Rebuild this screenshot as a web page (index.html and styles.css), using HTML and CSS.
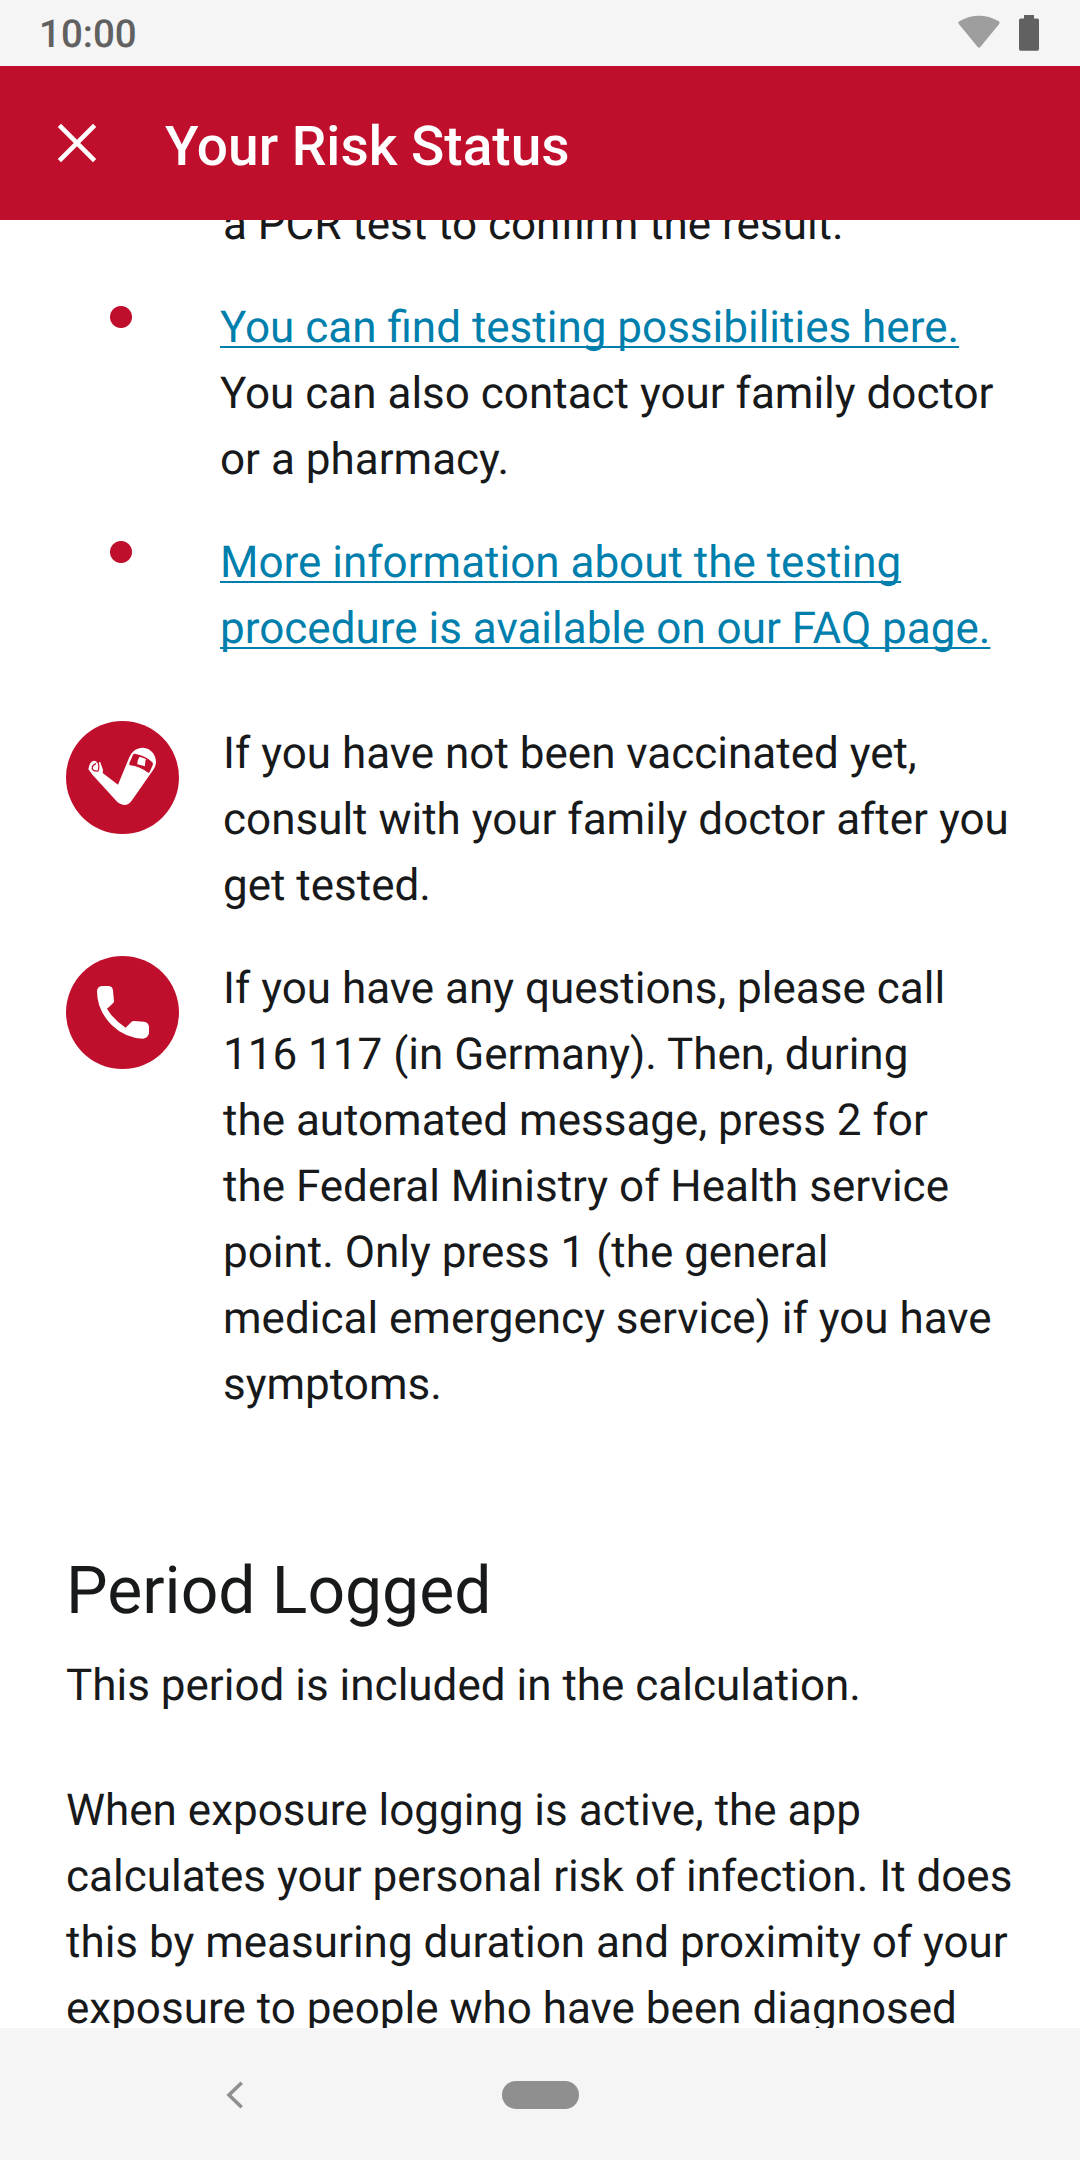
FILE: index.html
```html
<!DOCTYPE html>
<html lang="en"><head><meta charset="utf-8"><title>Your Risk Status</title><link rel="stylesheet" href="styles.css"></head>
<body>
<div class="status"><span class="clock">10:00</span><span class="indicators">
<svg class="wifi" width="44" height="34" viewBox="0 0 44 34"><path d="M2.2 9.4Q.2 7.2 2.7 6Q22-4.6 41.4 6Q43.6 7.2 41.8 9.4L23.3 32Q22 33.6 20.7 32Z" fill="#9e9e9e"/></svg>
<svg class="battery" width="20" height="36" viewBox="0 0 20 36"><path d="M5 0h10v3.6h3.400q1.600 0 1.600 1.600v28.800q0 1.800-1.600 1.800H1.600q-1.600 0-1.600-1.800V5.200q0-1.600 1.600-1.600H5Z" fill="#616161"/></svg></span></div>
<header class="bar"><svg class="close" width="40" height="40" viewBox="0 0 40 40"><path d="M2.400 2.400L37.600 37.600M37.600 2.400L2.400 37.600" stroke="#fff" stroke-width="4.600"/></svg><h1>Your Risk Status</h1></header>
<main>
<p class="tail">a PCR test to confirm the result.</p>
<ul class="tips">
<li><a>You can find testing possibilities here.</a><br>You can also contact your family doctor<br>or a pharmacy.</li>
<li><a>More information about the testing<br>procedure is available on our FAQ page.</a></li>
</ul>
<section class="advice"><svg width="113" height="113" viewBox="48 63 339 339"><circle cx="217.500" cy="232.500" r="169.500" fill="#c00f2d"/>
<path d="M237 174C246 153 260 143 279 143C302 144 319 164 318 188C317 199 311 208 303 219L246 301Q237 315 223 315Q209 314 200 304L128 225Q123 218 115 208L118 196Q122 184 131 182L139 184L140 188L146 189L147 186L151 187L155 199L159 209L158 219L204 254Z" fill="#fff"/>
<path d="M249 164Q252 160 258 162Q287 167 307 187Q310 191 308 196L299 216Q297 220 292 217Q268 199 241 196Q237 196 238 190Z" fill="#c00f2d"/>
<path d="M269 170L288 177Q285 183 285 199L262 193Q261 180 269 170Z" fill="#fff"/>
<path d="M138 191Q125 196 127 208Q132 214 144 213Q149 203 144 185" fill="none" stroke="#c00f2d" stroke-width="3.600"/></svg><p>If you have not been vaccinated yet,<br>consult with your family doctor after you<br>get tested.</p></section>
<section class="advice"><svg width="113" height="113" viewBox="48 48 339 339"><circle cx="217.500" cy="217.500" r="169.500" fill="#c00f2d"/>
<path d="M141 154Q142 139 156 138H176Q188 139 189 152L192 183Q192 187 189 190L171 206Q192 241 227 263L244 246Q247 243 252 243L282 245Q295 247 297 260V280Q294 295 279 296Q224 293 184 254Q141 210 141 154Z" fill="#fff"/></svg><p>If you have any questions, please call<br>116 117 (in Germany). Then, during<br>the automated message, press 2 for<br>the Federal Ministry of Health service<br>point. Only press 1 (the general<br>medical emergency service) if you have<br>symptoms.</p></section>
<section class="period"><h2>Period Logged</h2><p>This period is included in the calculation.</p><p class="explain">When exposure logging is active, the app<br>calculates your personal risk of infection. It does<br>this by measuring duration and proximity of your<br>exposure to people who have been diagnosed</p></section>
</main>
<nav><svg class="back" width="20" height="28" viewBox="0 0 20 28"><path d="M16.700 1.700L4 14L16.700 26.300" fill="none" stroke="#8f8f8f" stroke-width="3.600"/></svg><span class="home"></span></nav>
</body></html>
```
FILE: styles.css
```css
*{box-sizing:border-box;margin:0;padding:0}
body{width:1080px;height:2160px;display:flex;flex-direction:column;overflow:hidden;background:#fff;color:#17191a;font:44px/66px Roboto,sans-serif;text-rendering:geometricPrecision}
.status{height:66px;flex:none;background:#f5f5f5;display:flex;justify-content:space-between;padding:0 41px 0 39px}
.clock{font-size:38.5px;font-weight:500;color:#616161;line-height:70px}
.indicators{display:flex;gap:18px;padding-top:15px}
.bar{height:154px;flex:none;background:#c00f2d;color:#fff;display:flex;padding:0 57px}
.close{margin-top:57px}
h1{font-size:55px;font-weight:500;line-height:162px;margin-left:68px}
main{flex:1;min-height:0;overflow:hidden;padding:0 66px;white-space:nowrap}
.tail{margin:-29px 0 0 157px}
.tips{list-style:none;padding:37px 0 0 43px}
.tips li{padding-left:111px;margin-bottom:37px;background:radial-gradient(circle at 12px 23px,#c00f2d 10.5px,transparent 11.5px)}
a{color:#007fad;text-decoration:underline 2px;text-underline-offset:4px;text-decoration-skip-ink:none}
.advice{display:flex;gap:44px;margin-top:60px}
.advice+.advice{margin-top:38px}
.advice svg{flex:none}
.advice p{margin-top:-1px}
.period{margin-top:134px}
h2{font-size:66px;font-weight:400;line-height:82px;margin-bottom:19px}
.explain{margin-top:59px}
nav{height:132px;flex:none;background:#f5f5f5;display:flex;align-items:center;padding:1px 0 0 225px}
.home{width:77px;height:28px;border-radius:14px;background:#8f8f8f;margin-left:257px}
```
